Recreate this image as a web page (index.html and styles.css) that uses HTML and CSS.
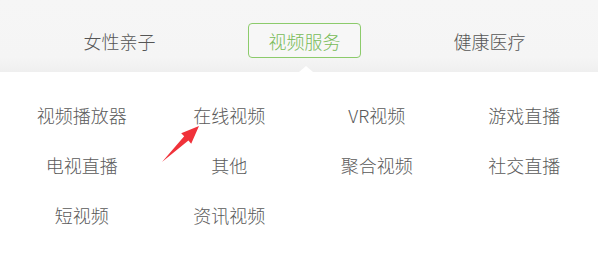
FILE: index.html
```html
<!DOCTYPE html>
<html lang="zh-CN">
<head>
    <meta charset="UTF-8">
    <meta name="viewport" content="width=device-width, initial-scale=1.0">
    <title>视频服务</title>
    <link rel="stylesheet" href="styles.css">
</head>
<body>
    <div class="tab-bar">
        <div class="tab"><span class="tab-label">女性亲子</span></div>
        <div class="tab"><span class="tab-label active">视频服务</span></div>
        <div class="tab"><span class="tab-label">健康医疗</span></div>
    </div>

    <div class="menu">
        <div class="menu-grid">
            <a class="menu-item">视频播放器</a>
            <a class="menu-item">在线视频</a>
            <a class="menu-item">VR视频</a>
            <a class="menu-item">游戏直播</a>
            <a class="menu-item">电视直播</a>
            <a class="menu-item">其他</a>
            <a class="menu-item">聚合视频</a>
            <a class="menu-item">社交直播</a>
            <a class="menu-item">短视频</a>
            <a class="menu-item">资讯视频</a>
        </div>

        <svg class="pointer" width="60" height="60" viewBox="150 115 60 60">
            <polygon points="162,162 184.2,136.2 181.2,133.3 199,126 191.2,143.7 188.4,140.6" fill="#f0323a"/>
        </svg>
    </div>
</body>
</html>
```

FILE: styles.css
```css
body {
    margin: 0;
    padding: 0;
    font-family: "Noto Sans CJK SC", "Noto Sans", sans-serif;
    font-weight: 300;
    background: #FFFFFF;
    color: #5A5A5A;
}

.tab-bar {
    display: flex;
    height: 72px;
    box-sizing: border-box;
    padding: 23px 0 0 27px;
    background: linear-gradient(to bottom, #F6F6F6 0%, #F5F5F5 80%, #EFEFEF 100%);
}

.tab {
    width: 185px;
    display: flex;
    justify-content: center;
}

.tab-label {
    position: relative;
    display: flex;
    align-items: center;
    justify-content: center;
    width: 113px;
    height: 35px;
    box-sizing: border-box;
    font-size: 18px;
    color: #555555;
}

.tab-label.active {
    border: 1px solid #8CCB6B;
    border-radius: 4px;
    color: #78BB58;
    background: #F7F7F7;
}

.tab-label.active::after {
    content: "";
    position: absolute;
    left: 50%;
    bottom: -15px;
    margin-left: -6px;
    border-left: 7px solid transparent;
    border-right: 7px solid transparent;
    border-bottom: 6px solid #FFFFFF;
}

.menu {
    position: relative;
    padding: 18px 0 0 8px;
}

.menu-grid {
    display: grid;
    grid-template-columns: repeat(4, 147.5px);
    grid-auto-rows: 50px;
}

.menu-item {
    display: flex;
    align-items: center;
    justify-content: center;
    font-size: 18px;
    color: #5A5A5A;
    cursor: pointer;
}

.pointer {
    position: absolute;
    left: 150px;
    top: 43px;
}
```
